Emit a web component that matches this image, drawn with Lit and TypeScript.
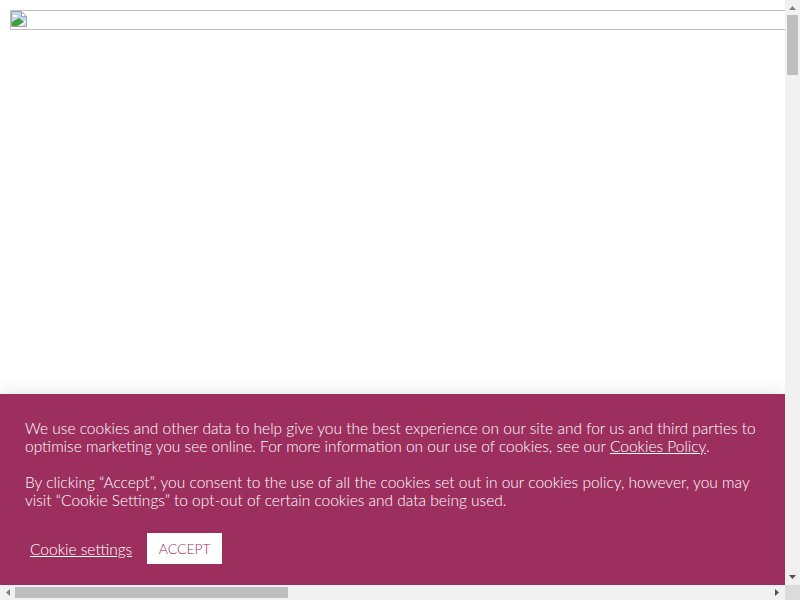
import { LitElement, html, css } from "lit";
import { customElement } from "lit/decorators.js";

@customElement("app-root")
export class AppRoot extends LitElement {
  static styles = css`
    :host {
      display: grid;
      grid-template-columns: 785px 15px;
      grid-template-rows: 585px 15px;
      width: 800px;
      height: 600px;
      overflow: hidden;
      background: #fff;
      font-family: "Lato", "Open Sans", sans-serif;
    }
    .page {
      display: flex;
      flex-direction: column;
      justify-content: space-between;
      overflow: hidden;
      min-width: 0;
    }
    .frame {
      flex: none;
      display: flex;
      align-items: flex-start;
      width: 900px;
      height: 20px;
      margin: 10px 0 0 10px;
      box-sizing: border-box;
      border: 1px solid #c0c0c0;
    }
    .frame svg {
      display: block;
      flex: none;
    }
    .banner {
      flex: none;
      box-sizing: border-box;
      height: 191px;
      padding: 25px 25px 0;
      background: #9c2f5e;
      color: #fff;
      font-size: 15.5px;
      font-weight: 300;
      line-height: 18px;
      box-shadow: 0 0 18px rgba(0, 0, 0, 0.12);
    }
    .banner p {
      margin: 0 0 18px;
    }
    .banner a {
      color: inherit;
      text-decoration: underline;
    }
    .actions {
      display: flex;
      align-items: center;
      gap: 15px;
      margin-top: 24px;
      padding-left: 5px;
    }
    .accept {
      box-sizing: border-box;
      width: 75px;
      height: 31px;
      border: none;
      padding: 0;
      background: #fff;
      color: #9c2f5e;
      font: inherit;
      font-size: 14px;
    }
    .vbar,
    .hbar {
      display: flex;
      background: #f1f1f1;
    }
    .vbar {
      flex-direction: column;
      align-items: center;
      justify-content: space-between;
    }
    .hbar {
      align-items: center;
      justify-content: space-between;
    }
    .vbar .arrow-box {
      width: 15px;
      height: 15px;
      flex: none;
      display: block;
    }
    .hbar .arrow-box {
      width: 15px;
      height: 15px;
      flex: none;
      display: block;
    }
    .vtrack {
      flex: 1;
      width: 100%;
    }
    .vthumb {
      width: 11px;
      height: 60px;
      margin-left: 2px;
      background: #bebebe;
    }
    .htrack {
      flex: 1;
      height: 100%;
      display: flex;
      align-items: center;
    }
    .hthumb {
      width: 273px;
      height: 11px;
      background: #bebebe;
    }
    .corner {
      background: #dcdcdc;
    }
  `;

  render() {
    return html`
      <div class="page">
        <div class="frame">
          <svg width="16" height="16" viewBox="0 0 16 16">
            <path d="M0.5 0.5H10.5L15.5 5.5V15.5H0.5Z" fill="#c3d5f3" stroke="#a0a0a0" />
            <path d="M10.5 0.5V5.5H15.5Z" fill="#fff" stroke="#a0a0a0" />
            <path d="M2 4h4v2H2z" fill="#fff" />
            <path d="M1 15V11L8 7L13 11L6 15Z" fill="#3fa03a" />
            <path d="M9 15L15 9V11L11 15Z" fill="#fff" />
          </svg>
        </div>
        <div class="banner">
          <p>
            We use cookies and other data to help give you the best experience on our site and for us and third parties to
            optimise marketing you see online. For more information on our use of cookies, see our
            <a href="#">Cookies Policy</a>.
          </p>
          <p>
            By clicking “Accept”, you consent to the use of all the cookies set out in our cookies policy, however, you may
            visit “Cookie Settings” to opt-out of certain cookies and data being used.
          </p>
          <div class="actions">
            <a href="#">Cookie settings</a>
            <button class="accept">ACCEPT</button>
          </div>
        </div>
      </div>
      <div class="vbar">
        <svg class="arrow-box" viewBox="0 0 15 15"><path d="M4 10L7.5 6L11 10Z" fill="#808080" /></svg>
        <div class="vtrack"><div class="vthumb"></div></div>
        <svg class="arrow-box" viewBox="0 0 15 15"><path d="M4 5H11L7.5 9Z" fill="#505050" /></svg>
      </div>
      <div class="hbar">
        <svg class="arrow-box" viewBox="0 0 15 15"><path d="M10 4V11L6 7.5Z" fill="#808080" /></svg>
        <div class="htrack"><div class="hthumb"></div></div>
        <svg class="arrow-box" viewBox="0 0 15 15"><path d="M5 4V11L9 7.5Z" fill="#505050" /></svg>
      </div>
      <div class="corner"></div>
    `;
  }
}
